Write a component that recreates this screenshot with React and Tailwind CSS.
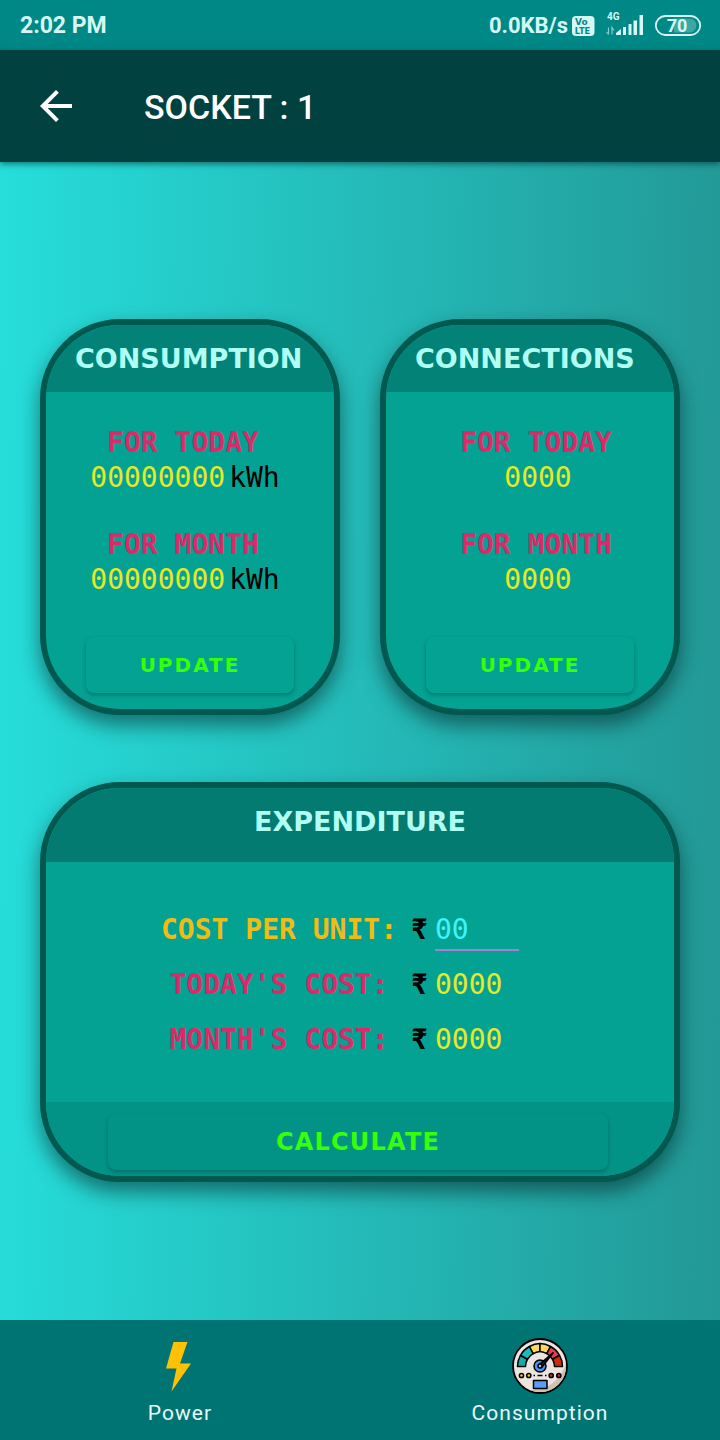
import React from "react";
import { clsx } from "clsx";

function StatusBar() {
  return (
    <div className="flex h-[50px] items-center justify-between bg-[#008886] pt-0.5 pr-[18px] pl-5 font-['Roboto',sans-serif] font-bold text-[#d5f8f5]">
      <span className="text-[23px] leading-8">2:02 PM</span>
      <div className="flex items-center">
        <span className="text-[22px] leading-8">0.0KB/s</span>
        <svg className="ml-1 h-5 w-6" viewBox="0 0 24 20" role="img" aria-label="VoLTE">
          <rect x="0" y="0" width="22.500" height="20" rx="4" fill="#d5f8f5" />
          <text x="3" y="9" fontSize="9" fontWeight="700" fill="#008886" fontFamily="DejaVu Sans">Vo</text>
          <text x="3" y="18" fontSize="9" fontWeight="900" fill="#008886" fontFamily="Roboto">LTE</text>
        </svg>
        <svg className="ml-2.5 h-7 w-10" viewBox="0 0 40 28" role="img" aria-label="4G signal">
          <text x="1" y="8" fontSize="10" fontWeight="700" fill="#d5f8f5" fontFamily="Roboto">4G</text>
          <path d="M2.500 15.500v7M0.500 20l2 2.500 M6 22.500v-7l2 3" stroke="#7fd0cb" strokeWidth="1.200" fill="none" />
          <path d="M10 23v-2l5-4v6z M17 23v-8h3v8z M22.500 23v-11h3v11z M27.500 23v-14.500h3.500v14.500z M33.500 23v-20h3.500v20z" fill="#d5f8f5" />
        </svg>
        <svg className="ml-2 h-6 w-12" viewBox="0 0 48 24" role="img" aria-label="Battery 70%">
          <path d="M20 4.500h15.500a7 7 0 0 1 0 14h-15.500z" fill="#3ba6a2" />
          <rect x="1.800" y="2" width="44.400" height="19" rx="9.500" fill="none" stroke="#d5f8f5" strokeWidth="1.800" />
          <text x="23" y="18" fontSize="18" fontWeight="700" textAnchor="middle" fill="#d5f8f5" fontFamily="Roboto">70</text>
        </svg>
      </div>
    </div>
  );
}

function Heading({ children, className }) {
  return (
    <h2 className={clsx("font-['DejaVu_Sans',sans-serif] text-[27px] leading-8 font-bold text-[#b0fff4]", className)}>
      {children}
    </h2>
  );
}

function ActionButton({ children, className }) {
  return (
    <button
      type="button"
      className={clsx(
        "h-14 rounded-lg font-['DejaVu_Sans',sans-serif] font-bold text-[#37ff0a] uppercase shadow-[0_2px_4px_rgba(0,60,55,0.4)]",
        className
      )}
    >
      {children}
    </button>
  );
}

const cardClass =
  "flex flex-col overflow-hidden rounded-[80px] border-6 border-[#00584f] bg-[#04a293] shadow-[0_10px_20px_rgba(0,20,20,0.5)]";

function Reading({ label, value, unit }) {
  return (
    <div className="flex flex-col items-center">
      <dt className="pr-1 font-bold text-[#dc2968]">{label}</dt>
      <dd className="flex gap-1 text-[#e6e82a]">
        <span>{value}</span>
        {unit && <span className="text-black">{unit}</span>}
      </dd>
    </div>
  );
}

function StatCard({ title, value, unit, listClass }) {
  return (
    <section className={clsx(cardClass, "h-[396px] flex-1")}>
      <Heading className="h-[67px] bg-[#038377] pt-[18px] pl-[29px]">{title}</Heading>
      <dl className={clsx("mt-[33px] flex flex-col gap-8 font-['DejaVu_Sans_Mono',monospace] text-[28px] leading-[35px]", listClass)}>
        <Reading label="FOR TODAY" value={value} unit={unit} />
        <Reading label="FOR MONTH" value={value} unit={unit} />
      </dl>
      <ActionButton className="mx-10 mt-auto mb-4 text-xl tracking-widest">Update</ActionButton>
    </section>
  );
}

const rowClass = "flex h-[55px] items-center";
const labelClass = "w-[236px] text-center whitespace-nowrap font-bold";

function Rupee() {
  return <span className="mr-1 ml-3.5 w-5 font-bold text-black">₹</span>;
}

function ExpenditureCard() {
  return (
    <section className={clsx(cardClass, "h-[400px]")}>
      <Heading className="h-[74px] bg-[#037b70] pt-[18px] text-center">EXPENDITURE</Heading>
      <div className="flex-1 pt-10 pl-[115px] font-['DejaVu_Sans_Mono',monospace] text-[28px] leading-8">
        <div className={rowClass}>
          <label htmlFor="unit-cost" className={clsx(labelClass, "text-[#eebc18]")}>COST PER UNIT:</label>
          <Rupee />
          <input
            id="unit-cost"
            type="text"
            inputMode="decimal"
            defaultValue="00"
            className="h-[42px] w-[84px] border-b-2 border-[#a480d4] bg-transparent pt-0.5 text-[#3cf4fa] outline-none"
          />
        </div>
        <div className={rowClass}>
          <span className={clsx(labelClass, "text-[#dc2968]")}>TODAY'S COST:</span>
          <Rupee />
          <output className="text-[#e6e82a]">0000</output>
        </div>
        <div className={rowClass}>
          <span className={clsx(labelClass, "text-[#dc2968]")}>MONTH'S COST:</span>
          <Rupee />
          <output className="text-[#e6e82a]">0000</output>
        </div>
      </div>
      <div className="flex h-[74px] flex-col bg-[#039386] pt-3 pr-[66px] pl-[62px]">
        <ActionButton className="text-2xl tracking-wider">Calculate</ActionButton>
      </div>
    </section>
  );
}

function BoltIcon() {
  return (
    <svg className="size-14" viewBox="0 0 56 56" aria-hidden="true">
      <path d="M21.500 4h14l-7.500 21.500h11L19.500 53.500l5-23H14z" fill="#fec107" />
    </svg>
  );
}

function GaugeIcon() {
  return (
    <svg className="size-14" viewBox="0 0 56 56" aria-hidden="true">
      <circle cx="28" cy="28" r="27" fill="#ece4de" stroke="#000" strokeWidth="1.800" />
      <path d="M54 26a26 26 0 0 1-36 26q26 0 36-26z" fill="#cfc2b4" />
      <g stroke="#000" strokeWidth="1.500" strokeLinejoin="round">
        <path d="M5.500 28.500A22.500 22.500 0 0 1 8.500 17.250L15.450 21.250A14.500 14.500 0 0 0 13.500 28.500z" fill="#17a9ac" />
        <path d="M8.500 17.250A22.500 22.500 0 0 1 17.500 8.500L21.200 15.700A14.500 14.500 0 0 0 15.450 21.250z" fill="#22b8ba" />
        <path d="M17.500 8.500A22.500 22.500 0 0 1 28 5.500V13.500A14.500 14.500 0 0 0 21.200 15.700z" fill="#fed75e" />
        <path d="M28 5.500A22.500 22.500 0 0 1 38.500 8.500L34.800 15.700A14.500 14.500 0 0 0 28 13.500z" fill="#fed75e" />
        <path d="M38.500 8.500A22.500 22.500 0 0 1 47.500 17.250L40.550 21.250A14.500 14.500 0 0 0 34.800 15.700z" fill="#ee3a52" />
        <path d="M47.500 17.250A22.500 22.500 0 0 1 50.500 28.500H42.500A14.500 14.500 0 0 0 40.550 21.250z" fill="#cf2a0d" />
        <circle cx="28" cy="28" r="6" fill="#4f94f5" />
        <path d="M27 27L41 15L29.500 29.500z" fill="#2a3350" strokeWidth="1.800" />
        <circle cx="28" cy="28" r="2" fill="#9cc4ff" />
        <circle cx="9.500" cy="37.500" r="2.100" fill="#fbc61c" />
        <circle cx="16.800" cy="37.500" r="2.100" fill="#fbc61c" />
        <circle cx="39.200" cy="37.500" r="2.100" fill="#cf2a3a" />
        <circle cx="46.800" cy="37.500" r="2.100" fill="#cf2a3a" />
        <path d="M21.500 37.500h1.500M25.500 37.500h5M33 37.500h1.500" fill="none" />
        <rect x="21.500" y="42.500" width="13.500" height="8" fill="#5a9df8" />
      </g>
    </svg>
  );
}

function NavItem({ icon, children }) {
  return (
    <a href="#" className="flex flex-1 flex-col items-center gap-[3px] pt-[18px]">
      {icon}
      <span className="leading-8 tracking-wider">{children}</span>
    </a>
  );
}

export default function App() {
  return (
    <div className="flex min-h-screen flex-col bg-linear-[91deg,#26dedb,#229896]">
      <StatusBar />
      <header className="flex h-28 items-center bg-[#014140] pl-8 shadow-[0_2px_6px_rgba(0,50,50,0.6)]">
        <button type="button" aria-label="Back" className="size-12">
          <svg className="size-12" viewBox="0 0 24 24" fill="#fff" aria-hidden="true">
            <path d="M20 11H7.830l5.590-5.590L12 4l-8 8 8 8 1.410-1.410L7.830 13H20v-2z" />
          </svg>
        </button>
        <h1 className="ml-16 pt-0.5 font-['Roboto',sans-serif] text-[34px] leading-10 font-medium text-white">SOCKET : 1</h1>
      </header>
      <main className="flex flex-1 flex-col gap-[67px] px-10 pt-[157px]">
        <div className="flex gap-10">
          <StatCard title="CONSUMPTION" value="00000000" unit="kWh" listClass="pr-2.5" />
          <StatCard title="CONNECTIONS" value="0000" listClass="pl-4" />
        </div>
        <ExpenditureCard />
      </main>
      <nav className="flex h-[120px] bg-[#007472] font-['Roboto',sans-serif] text-[21px] text-[#e6fbfa]">
        <NavItem icon={<BoltIcon />}>Power</NavItem>
        <NavItem icon={<GaugeIcon />}>Consumption</NavItem>
      </nav>
    </div>
  );
}
